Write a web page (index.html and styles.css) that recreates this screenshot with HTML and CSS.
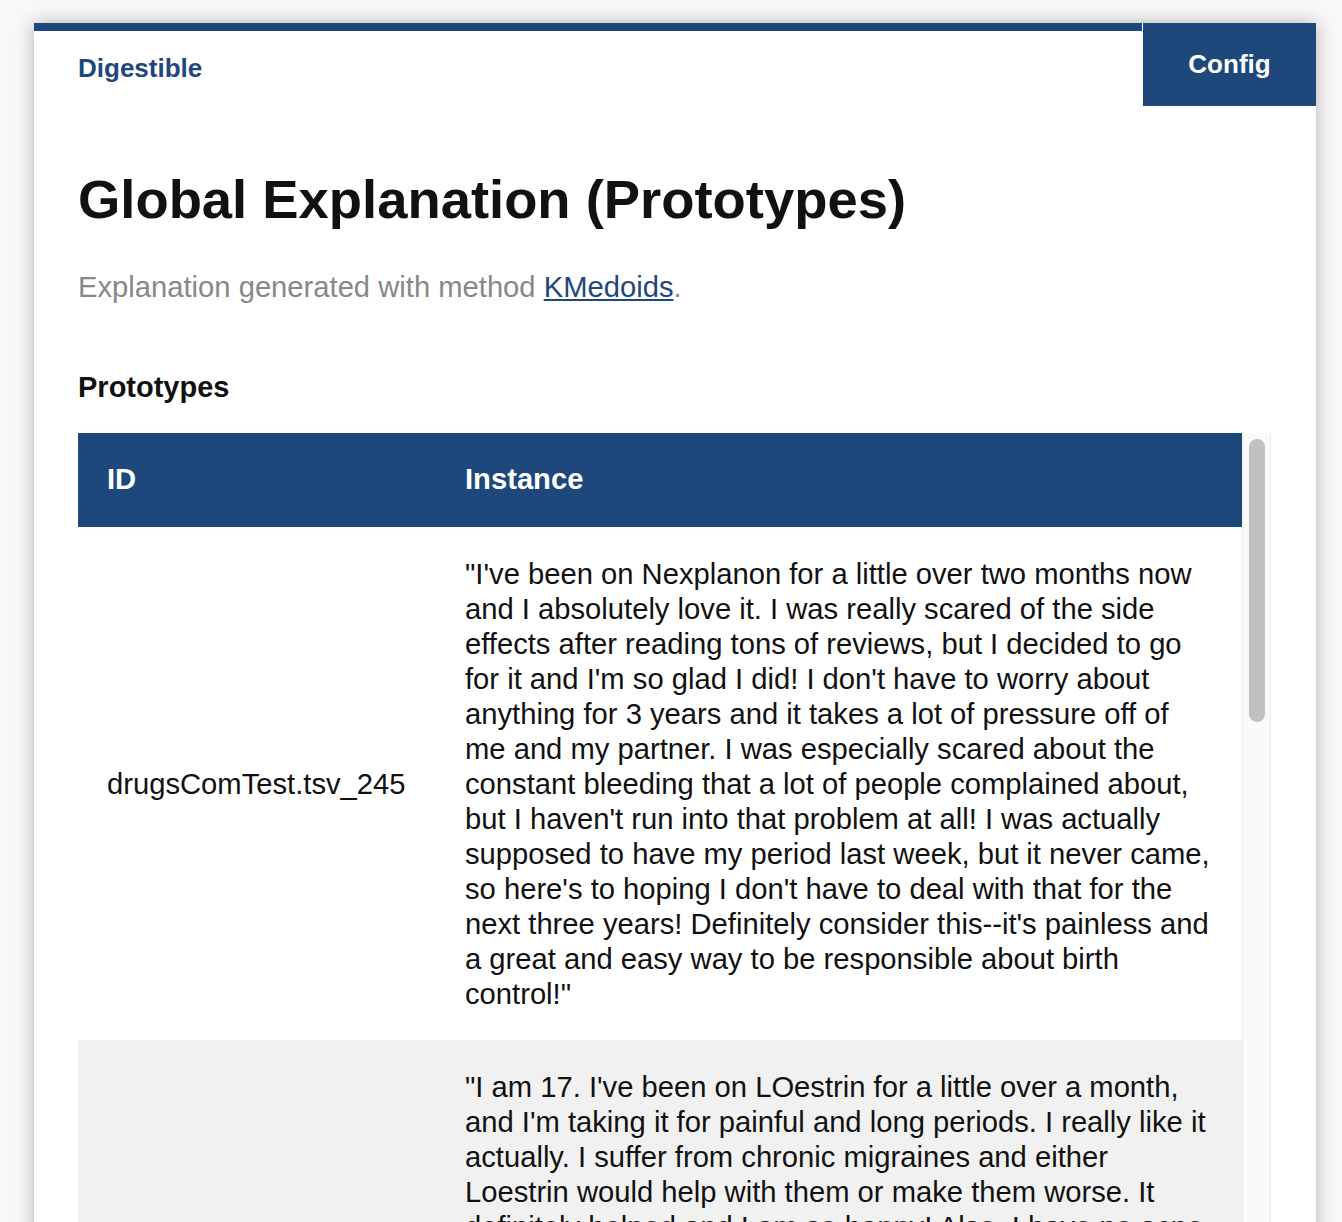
FILE: index.html
```html
<!DOCTYPE html>
<html lang="en">
<head>
<meta charset="utf-8">
<title>Digestible - Global Explanation</title>
<link rel="stylesheet" href="styles.css">
</head>
<body>
<div class="card">
  <header class="topbar">
    <div class="brand-bar"><a class="brand" href="#">Digestible</a></div>
    <button class="config">Config</button>
  </header>
  <main class="content">
    <h1 class="title">Global Explanation (Prototypes)</h1>
    <p class="subtitle">Explanation generated with method <a href="#" class="method">KMedoids</a>.</p>
    <h2 class="section">Prototypes</h2>
    <div class="table-wrap">
      <table class="protos">
        <thead>
          <tr><th class="id-col">ID</th><th>Instance</th></tr>
        </thead>
        <tbody>
          <tr>
            <td>drugsComTest.tsv_245</td>
            <td>"I've been on Nexplanon for a little over two months now and I absolutely love it. I was really scared of the side effects after reading tons of reviews, but I decided to go for it and I'm so glad I did! I don't have to worry about anything for 3 years and it takes a lot of pressure off of me and my partner. I was especially scared about the constant bleeding that a lot of people complained about, but I haven't run into that problem at all! I was actually supposed to have my period last week, but it never came, so here's to hoping I don't have to deal with that for the next three years! Definitely consider this--it's painless and a great and easy way to be responsible about birth control!"</td>
          </tr>
          <tr class="alt">
            <td>drugsComTest.tsv_1182</td>
            <td>"I am 17. I've been on LOestrin for a little over a month, and I'm taking it for painful and long periods. I really like it actually. I suffer from chronic migraines and either Loestrin would help with them or make them worse. It definitely helped and I am so happy! Also, I have no acne anymore and my skin is so much clearer than before. My periods are lighter and much shorter, and the cramps are almost gone. I was worried about gaining weight because a lot of people said they did, but I haven't gained anything at all. The only side effect I've noticed is that I get a little nauseous if I take it on an empty stomach, so I always take it with dinner now. My mood has been pretty stable too, which I was also nervous about, and I haven't had any spotting between periods. My doctor said it can take about three months for your body to fully adjust, so I'm excited to see how it goes. Overall I would definitely recommend it to anyone who is dealing with painful periods or migraines!"</td>
          </tr>
        </tbody>
      </table>
      <div class="scroll-track"><div class="scroll-thumb"></div></div>
    </div>
  </main>
</div>
</body>
</html>
```

FILE: styles.css
```css
html, body {
  margin: 0;
  padding: 0;
}
body {
  background: #f8f8f8;
  font-family: "Liberation Sans", Arial, Helvetica, sans-serif;
  color: #111;
  overflow: hidden;
}
.card {
  margin: 23px 26px 0 34px;
  background: #fff;
  box-shadow: 0 0 18px rgba(0, 0, 0, 0.28);
  min-height: 1300px;
}
.topbar {
  display: flex;
  height: 83px;
}
.brand-bar {
  flex: 1;
  border-top: 8px solid #1e477c;
  display: flex;
  align-items: center;
  padding-left: 44px;
}
.brand {
  color: #1e477c;
  font-weight: bold;
  font-size: 26px;
  text-decoration: none;
}
.config {
  margin-left: 1px;
  width: 173px;
  border: none;
  background: #1e477c;
  color: #fff;
  font-family: inherit;
  font-weight: bold;
  font-size: 26px;
  padding: 0;
}
.content {
  padding: 0 45px 0 44px;
}
.title {
  margin: 0;
  padding-top: 63px;
  font-size: 54.4px;
  line-height: 62px;
  font-weight: bold;
  color: #111;
}
.subtitle {
  margin: 39px 0 0;
  font-size: 29.2px;
  line-height: 34px;
  color: #888;
}
.method {
  color: #1e477c;
  text-decoration: underline;
}
.section {
  margin: 66px 0 0;
  font-size: 29px;
  line-height: 34px;
  font-weight: bold;
  color: #111;
}
.table-wrap {
  margin-top: 29px;
  display: flex;
  align-items: flex-start;
}
.protos {
  width: 100%;
  flex: 1 1 auto;
  border-collapse: collapse;
  table-layout: fixed;
  font-size: 29.2px;
  line-height: 35px;
}
.protos th.id-col {
  width: 358px;
}
.protos th {
  box-sizing: border-box;
  background: #1e477c;
  color: #fff;
  text-align: left;
  font-weight: bold;
  padding: 29px 29px 30px;
  line-height: 35px;
}
.protos td {
  padding: 30px 29px 28px;
  vertical-align: middle;
  color: #111;
}
.protos tr.alt td {
  background: #f1f1f1;
}
.scroll-track {
  flex: none;
  box-sizing: border-box;
  width: 29px;
  height: 800px;
  background: #fafafa;
  border-left: 1px solid #ececec;
  border-right: 1px solid #ececec;
  padding-top: 6px;
  display: flex;
  justify-content: center;
}
.scroll-thumb {
  width: 16px;
  height: 283px;
  border-radius: 8px;
  background: #c1c1c1;
}
```
